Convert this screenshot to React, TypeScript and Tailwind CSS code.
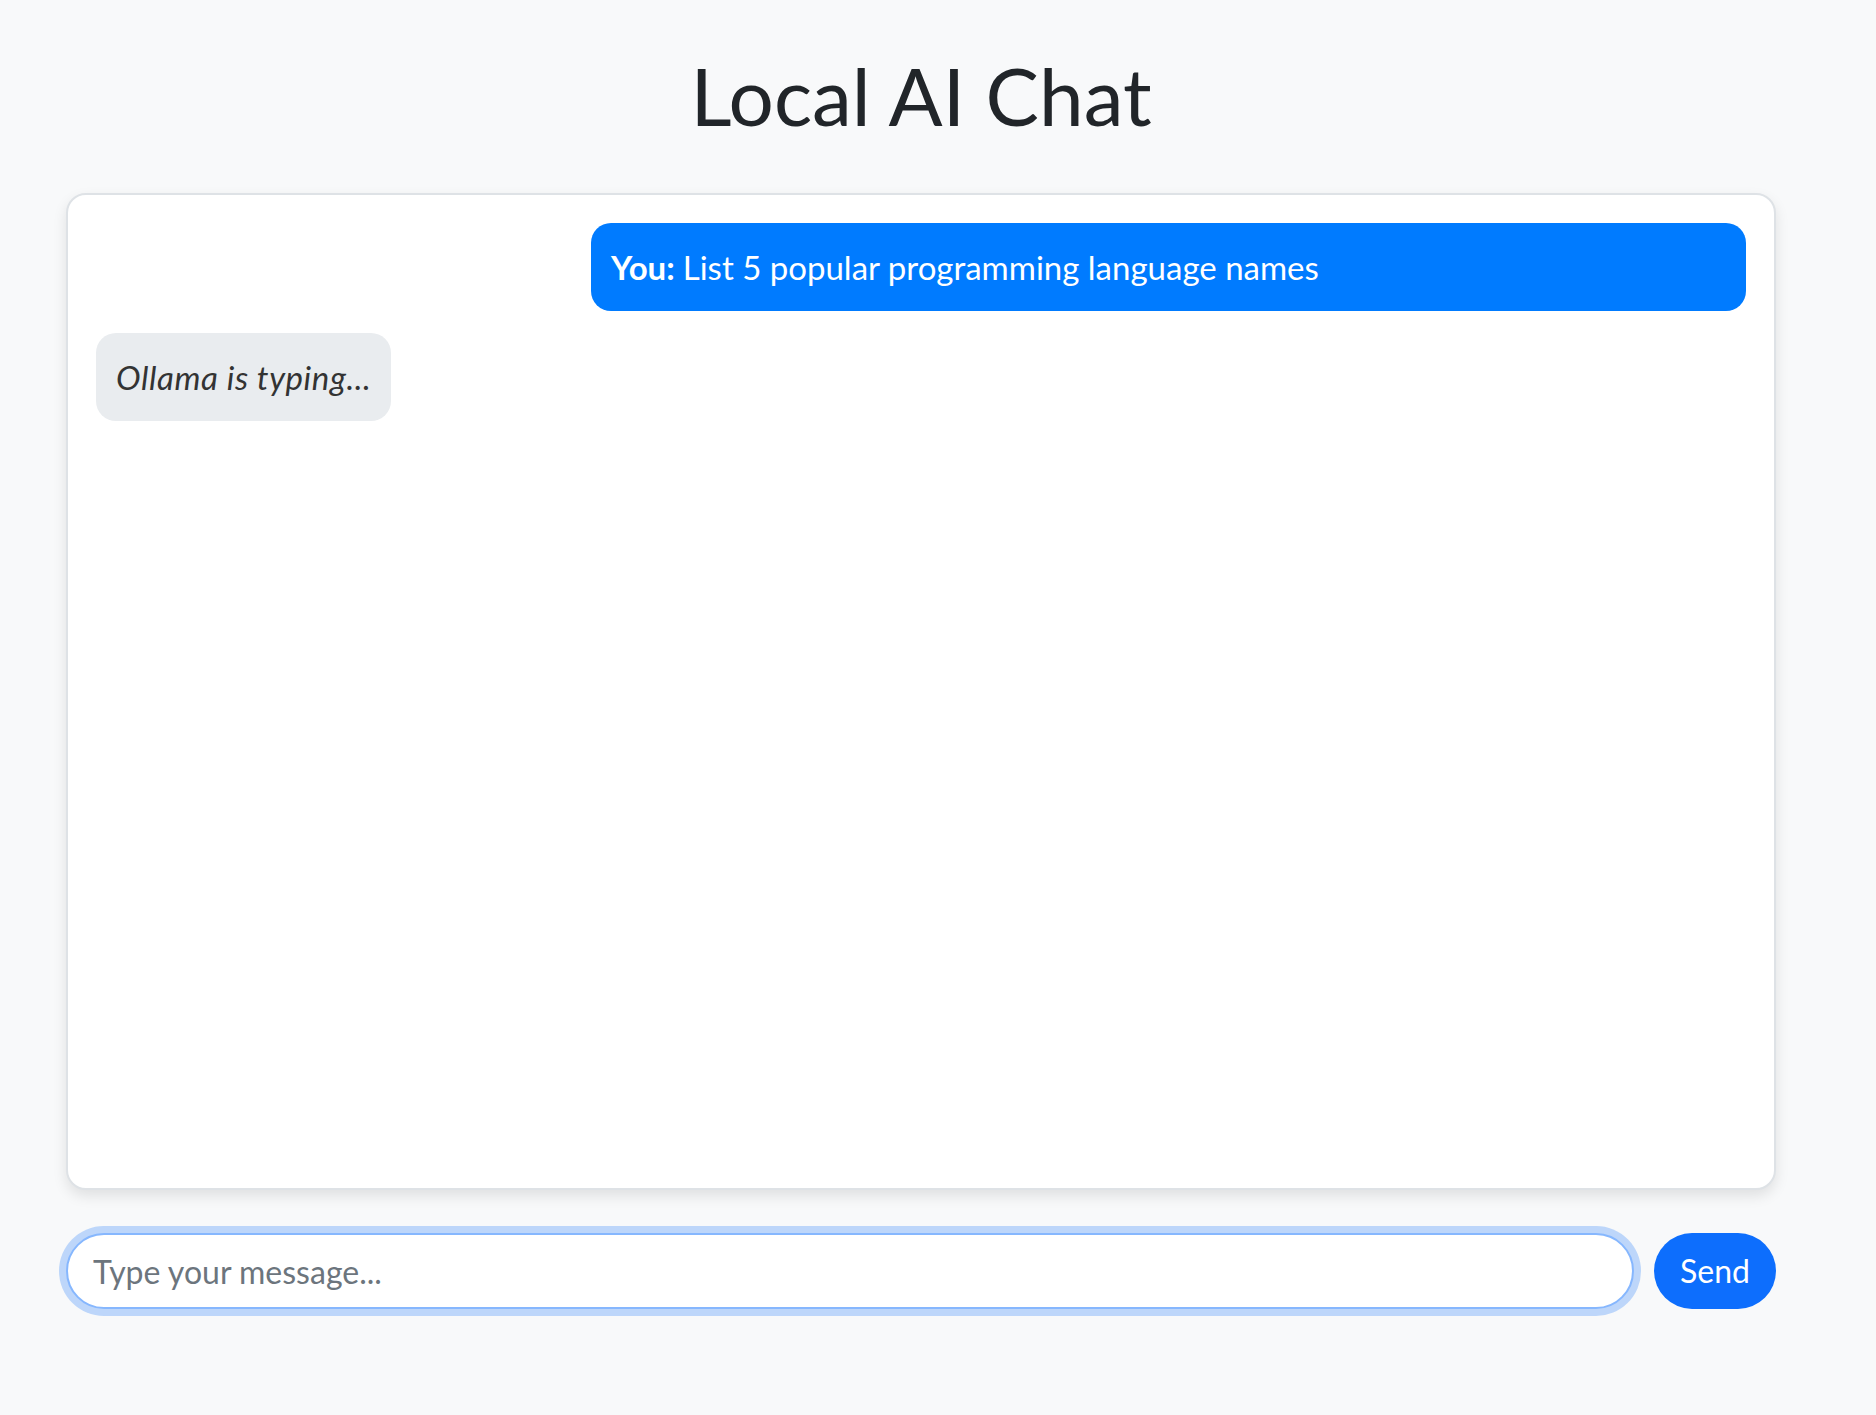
import { useState } from 'react';

type Message = {
  id: number;
  role: 'user' | 'assistant';
  content: string;
};

const initialMessages: Message[] = [
  { id: 1, role: 'user', content: 'List 5 popular programming language names' },
];

export default function App() {
  const [messages] = useState<Message[]>(initialMessages);
  const [input, setInput] = useState('');
  const [isTyping] = useState(true);

  return (
    <div className="min-h-screen bg-[#f8f9fa] font-['Lato','Noto_Sans',sans-serif] text-[#212529]">
      <div className="pl-[66px] pr-[100px] pt-[47px]">
        <h1 className="text-center text-[80px] leading-[96px] font-normal mb-[50px]">Local AI Chat</h1>

        <div className="h-[997px] bg-white border-2 border-[#dee2e6] rounded-[20px] p-[28px] shadow-[0_6px_14px_rgba(0,0,0,0.1)] overflow-y-auto">
          {messages.map((message) => (
            <div
              key={message.id}
              className={`mb-[22px] flex ${message.role === 'user' ? 'justify-end' : 'justify-start'}`}
            >
              <div
                className={`p-[20px] rounded-[20px] text-[33px] leading-[48px] ${
                  message.role === 'user' ? 'w-[70%] bg-[#007bff] text-white' : 'bg-[#e9ecef] text-[#333]'
                }`}
              >
                {message.role === 'user' && <strong className="font-bold">You: </strong>}
                {message.content}
              </div>
            </div>
          ))}

          {isTyping && (
            <div className="flex justify-start">
              <div className="p-[20px] rounded-[20px] bg-[#e9ecef] text-[#333] text-[33px] leading-[48px] italic tracking-[0.6px]">
                Ollama is typing...
              </div>
            </div>
          )}
        </div>

        <div className="mt-[43px] flex items-center gap-[20px]">
          <input
            autoFocus
            value={input}
            onChange={(e) => setInput(e.target.value)}
            placeholder="Type your message..."
            className="flex-1 h-[76px] px-[25px] rounded-full border-2 border-[#86b7fe] bg-white text-[32px] text-[#212529] placeholder:text-[#6c757d] outline-none shadow-[0_0_0_7px_rgba(13,110,253,0.25)]"
          />
          <button className="w-[122px] h-[76px] rounded-full bg-[#0d6efd] text-white text-[32px]">Send</button>
        </div>
      </div>
    </div>
  );
}
